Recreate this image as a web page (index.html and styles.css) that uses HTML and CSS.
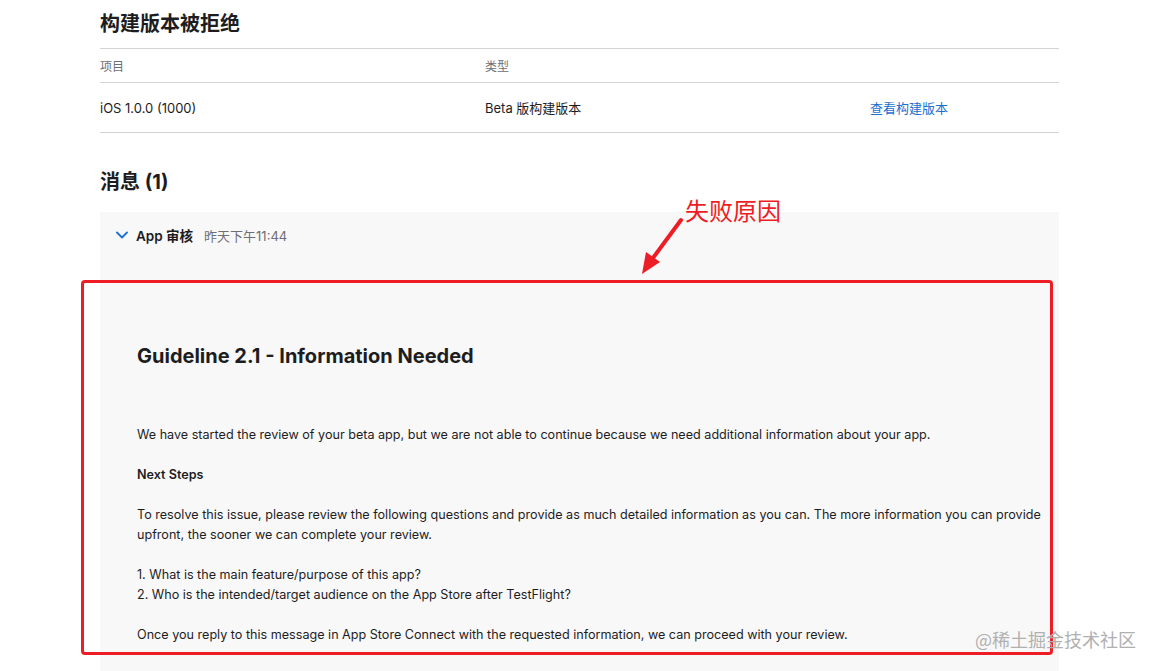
FILE: index.html
```html
<!DOCTYPE html>
<html lang="zh-CN">
<head>
  <meta charset="UTF-8">
  <title>构建版本被拒绝</title>
  <link rel="stylesheet" href="styles.css">
</head>
<body>
  <div class="page">
    <h2 class="section-title">构建版本被拒绝</h2>
    <div class="build-table">
      <div class="row head">
        <div class="cell">项目</div>
        <div class="cell">类型</div>
        <div class="cell"></div>
      </div>
      <div class="row">
        <div class="cell">iOS 1.0.0 (1000)</div>
        <div class="cell">Beta 版构建版本</div>
        <div class="cell"><a class="link" href="#">查看构建版本</a></div>
      </div>
    </div>

    <h2 class="section-title messages-title">消息 (1)</h2>
    <div class="message">
      <div class="message-head">
        <svg class="chevron" width="12" height="8" viewBox="0 0 12 8"><path d="M1 1.5 L6 6.5 L11 1.5" fill="none" stroke="#1d6fd1" stroke-width="1.8" stroke-linecap="round" stroke-linejoin="round"/></svg>
        <span class="sender">App 审核</span>
        <span class="time">昨天下午11:44</span>
      </div>
      <div class="message-body">
        <h3>Guideline 2.1 - Information Needed</h3>
        <p>We have started the review of your beta app, but we are not able to continue because we need additional information about your app.</p>
        <p class="strong">Next Steps</p>
        <p>To resolve this issue, please review the following questions and provide as much detailed information as you can. The more information you can provide upfront, the sooner we can complete your review.</p>
        <p>1. What is the main feature/purpose of this app?<br>2. Who is the intended/target audience on the App Store after TestFlight?</p>
        <p>Once you reply to this message in App Store Connect with the requested information, we can proceed with your review.</p>
      </div>
    </div>
  </div>

  <div class="mark-box"></div>
  <svg class="mark-arrow" width="60" height="70" viewBox="0 0 60 70">
    <path d="M45 8 L14 50" stroke="#ee1c25" stroke-width="4" stroke-linecap="round"/>
    <polygon points="6,62 10,40 24,50" fill="#ee1c25"/>
  </svg>
  <div class="mark-label">失败原因</div>
  <div class="watermark">@稀土掘金技术社区</div>
</body>
</html>
```

FILE: styles.css
```css
body {
  margin: 0;
  background: #fff;
  font-family: Inter, "Noto Sans CJK SC", sans-serif;
  color: #1d1d1f;
  overflow: hidden;
}

.page {
  margin-left: 100px;
  width: 959px;
}

.section-title {
  font-size: 20px;
  font-weight: 700;
  margin: 0;
  padding-top: 11px;
  height: 37px;
  line-height: 26px;
}

.build-table {
  border-top: 1px solid #d2d2d7;
}

.row {
  display: flex;
  height: 49px;
  align-items: center;
  border-bottom: 1px solid #d2d2d7;
  font-size: 13px;
}

.row.head {
  height: 33px;
  color: #6e6e73;
  font-size: 12px;
}

.cell {
  width: 385px;
}

.cell:last-child {
  width: auto;
}

.link {
  color: #1d6fd1;
  text-decoration: none;
}

.messages-title {
  margin-top: 25px;
  height: 43px;
}

.message {
  background: #f8f8f8;
  height: 460px;
}

.message-head {
  display: flex;
  align-items: center;
  height: 46px;
  padding-left: 16px;
  font-size: 13px;
}

.chevron {
  margin-right: 8px;
}

.sender {
  font-weight: 600;
  margin-right: 11px;
  font-size: 13.5px;
}

.time {
  color: #6e6e73;
  font-size: 13px;
}

.message-body {
  padding: 85px 18px 0 37px;
  font-size: 12.6px;
  line-height: 20px;
}

.message-body h3 {
  font-size: 20px;
  font-weight: 700;
  margin: 0 0 56px;
  line-height: 26px;
}

.message-body p {
  margin: 0 0 20px;
}

.message-body .strong {
  font-weight: 600;
}

.mark-box {
  position: absolute;
  left: 81px;
  top: 280px;
  width: 966px;
  height: 369px;
  border: 3px solid #ee1c25;
  border-radius: 4px;
}

.mark-arrow {
  position: absolute;
  left: 636px;
  top: 212px;
}

.mark-label {
  position: absolute;
  left: 685px;
  top: 192px;
  font-family: "Noto Sans CJK SC", sans-serif;
  font-size: 24px;
  color: #ee1c25;
}

.watermark {
  position: absolute;
  left: 975px;
  top: 626px;
  font-family: "Noto Sans CJK SC", sans-serif;
  font-size: 18px;
  color: #b0b0b0;
}
```
